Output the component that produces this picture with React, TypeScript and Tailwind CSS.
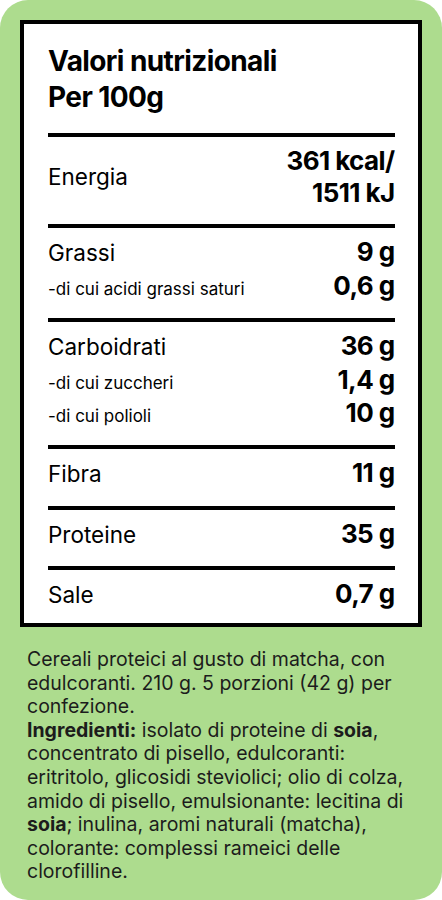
type Row = { label: string; value: string; sub?: boolean };

const sections: { rows: Row[]; pb: string }[] = [
  {
    rows: [
      { label: "Grassi", value: "9 g" },
      { label: "-di cui acidi grassi saturi", value: "0,6 g", sub: true },
    ],
    pb: "pb-[16px]",
  },
  {
    rows: [
      { label: "Carboidrati", value: "36 g" },
      { label: "-di cui zuccheri", value: "1,4 g", sub: true },
      { label: "-di cui polioli", value: "10 g", sub: true },
    ],
    pb: "pb-[16px]",
  },
  { rows: [{ label: "Fibra", value: "11 g" }], pb: "pb-[16px]" },
  { rows: [{ label: "Proteine", value: "35 g" }], pb: "pb-[15px]" },
  { rows: [{ label: "Sale", value: "0,7 g" }], pb: "pb-[12px]" },
];

const Divider = () => <div className="h-1 bg-black" />;

const NutritionRow = ({ row }: { row: Row }) => (
  <div
    className={`flex items-baseline justify-between ${
      row.sub ? "h-[33px] leading-[33px]" : "h-[34px] leading-[34px]"
    }`}
  >
    <span className={row.sub ? "text-[17px]" : "text-[22.5px]"}>{row.label}</span>
    <span className="text-[26px] font-bold tracking-[-0.6px]">{row.value}</span>
  </div>
);

export default function App() {
  return (
    <div
      className="w-[442px] h-[900px] bg-[#addc8e] rounded-[28px] p-5 flex flex-col text-black"
      style={{ fontFamily: "Inter, 'Noto Sans', sans-serif" }}
    >
      <div className="border-4 border-black bg-white pl-[24px] pr-[23.5px]">
        <div className="pt-[19px] pb-[18px] text-[28px] font-bold leading-[36px] tracking-[-0.6px]">
          <div>Valori nutrizionali</div>
          <div>Per 100g</div>
        </div>
        <Divider />

        <div className="flex items-center justify-between pt-[8px] pb-[15px]">
          <span className="text-[22.5px] leading-[32px]">Energia</span>
          <div className="text-right text-[26px] font-bold leading-[32px] tracking-[-0.6px]">
            <div>361 kcal/</div>
            <div>1511 kJ</div>
          </div>
        </div>

        {sections.map((s, i) => (
          <div key={i}>
            <Divider />
            <div className={`pt-[7px] ${s.pb}`}>
              {s.rows.map((r) => (
                <NutritionRow key={r.label} row={r} />
              ))}
            </div>
          </div>
        ))}
      </div>

      <p className="px-[7px] pt-[21px] text-[19.5px] leading-[23.6px] text-[#1c1c1c]">
        Cereali proteici al gusto di matcha, con edulcoranti. 210 g. 5 porzioni (42 g) per
        confezione.
        <br />
        <b>Ingredienti:</b> isolato di proteine di <b>soia</b>, concentrato di pisello,
        edulcoranti: eritritolo, glicosidi steviolici; olio di colza, amido di pisello,
        emulsionante: lecitina di <b>soia</b>; inulina, aromi naturali (matcha), colorante:
        complessi rameici delle clorofilline.
      </p>
    </div>
  );
}
